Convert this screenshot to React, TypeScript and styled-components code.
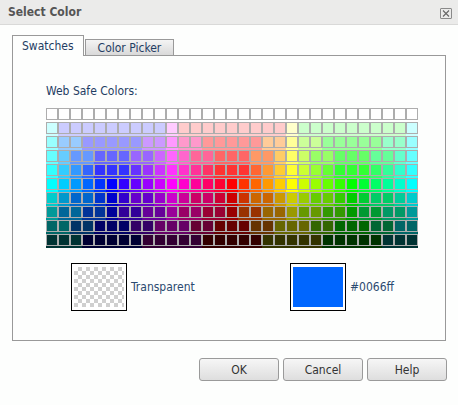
import styled, { createGlobalStyle } from "styled-components";

const COLS = 31;
const ROWS = 10;

// hue walks cyan -> blue -> magenta -> red -> yellow -> green -> cyan
const pureColor = (col: number): number[] => {
  const h = ((180 + col * 12) % 360) / 60;
  const x = 1 - Math.abs((h % 2) - 1);
  const seg = Math.floor(h) % 6;
  const table = [
    [1, x, 0],
    [x, 1, 0],
    [0, 1, x],
    [0, x, 1],
    [x, 0, 1],
    [1, 0, x],
  ];
  return table[seg].map((v) => v * 255);
};

const toHex = (rgb: number[]) =>
  "#" + rgb.map((v) => Math.max(0, Math.min(255, v)).toString(16).padStart(2, "0")).join("");

const swatchColor = (row: number, col: number) => {
  if (row === 0) return "#ffffff";
  const base = pureColor(col);
  if (row < 5) {
    const t = (5 - row) * 0.2;
    return toHex(base.map((v) => Math.floor((v + (255 - v) * t) / 51 + 0.001) * 51));
  }
  const k = 1 - (row - 5) * 0.2;
  return toHex(base.map((v) => Math.round((v * k) / 51) * 51));
};

const GlobalStyle = createGlobalStyle`
  body {
    margin: 0;
    background: #fdfefd;
    font-family: "DejaVu Sans Condensed", "DejaVu Sans", sans-serif;
  }
`;

const Dialog = styled.div`
  width: 458px;
  height: 405px;
  display: flex;
  flex-direction: column;
  background: #fdfefd;
`;

const TitleBar = styled.div`
  height: 24px;
  display: flex;
  align-items: center;
  justify-content: space-between;
  padding: 0 6px 0 8px;
  background: #ebebea;
  border-bottom: 1px solid #d9d9d8;
`;

const Title = styled.span`
  font-size: 12px;
  font-weight: bold;
  color: #555;
`;

const CloseButton = styled.div`
  width: 10px;
  height: 9px;
  border: 1px solid #8a8a8a;
  border-radius: 1px;
  display: flex;
  align-items: center;
  justify-content: center;
  margin-top: 2px;
`;

const Body = styled.div`
  padding: 10px 11px 0 12px;
  display: flex;
  flex-direction: column;
`;

const Tabs = styled.div`
  display: flex;
  align-items: flex-end;
  height: 21px;
  position: relative;
  z-index: 1;
`;

const Tab = styled.div<{ $active?: boolean }>`
  height: ${(p) => (p.$active ? "21px" : "17px")};
  padding: 0 ${(p) => (p.$active ? "9px" : "12px")};
  display: flex;
  align-items: center;
  font-size: 12px;
  color: #1f3d63;
  border: 1px solid #999;
  border-bottom: ${(p) => (p.$active ? "none" : "1px solid #999")};
  background: ${(p) =>
    p.$active ? "#fdfefd" : "linear-gradient(#f4f4f4, #d9d9d9)"};
  margin-right: 1px;
  box-sizing: border-box;
`;

const Panel = styled.div`
  height: 286px;
  box-sizing: border-box;
  border: 1px solid #999;
  margin-top: -1px;
  margin-right: 1px;
  padding: 28px 0 0 33px;
`;

const Label = styled.div`
  font-size: 12px;
  color: #1f3d63;
  height: 14px;
  line-height: 14px;
  margin-bottom: 10px;
`;

const Grid = styled.div`
  display: grid;
  grid-template-columns: repeat(${COLS}, 12px);
  grid-auto-rows: 14px;
  width: max-content;
`;

const Cell = styled.div`
  height: 14px;
`;

const Square = styled.div`
  width: 12px;
  height: 12px;
  box-sizing: border-box;
  border: 1px solid #adadad;
`;

const Previews = styled.div`
  display: grid;
  grid-template-columns: 219px auto;
  margin: 15px 0 0 25px;
`;

const PreviewItem = styled.div`
  display: flex;
  align-items: center;
  gap: 4px;
`;

const PreviewBox = styled.div`
  width: 56px;
  height: 48px;
  box-sizing: border-box;
  border: 1px solid #000;
  padding: 3px 2px;
  background: #fff;
  display: flex;
`;

const Fill = styled.div<{ $color?: string }>`
  flex: 1;
  background: ${(p) =>
    p.$color ?? "repeating-conic-gradient(#cfcfcf 0% 25%, #ffffff 0% 50%) 0 0 / 8px 8px"};
`;

const PreviewText = styled.span`
  font-size: 12px;
  color: #2b4a70;
`;

const Buttons = styled.div`
  display: flex;
  justify-content: flex-end;
  gap: 4px;
  padding-top: 17px;
`;

const Button = styled.button`
  width: 80px;
  height: 23px;
  border: 1px solid #9a9a9a;
  border-radius: 3px;
  background: linear-gradient(#f6f6f6, #dedede);
  font-family: inherit;
  font-size: 12px;
  color: #333;
  padding: 0;
`;

export default function App() {
  const cells = [];
  for (let r = 0; r < ROWS; r++) {
    for (let c = 0; c < COLS; c++) {
      const color = swatchColor(r, c);
      cells.push(
        <Cell key={`${r}-${c}`} style={{ background: color }}>
          <Square style={{ background: color }} />
        </Cell>
      );
    }
  }

  return (
    <>
      <GlobalStyle />
      <Dialog>
        <TitleBar>
          <Title>Select Color</Title>
          <CloseButton>
            <svg width="8" height="7" viewBox="0 0 8 7">
              <path d="M1 0.5L7 6.5M7 0.5L1 6.5" stroke="#666" strokeWidth="1.1" />
            </svg>
          </CloseButton>
        </TitleBar>
        <Body>
          <Tabs>
            <Tab $active>Swatches</Tab>
            <Tab>Color Picker</Tab>
          </Tabs>
          <Panel>
            <Label>Web Safe Colors:</Label>
            <Grid>{cells}</Grid>
            <Previews>
              <PreviewItem>
                <PreviewBox>
                  <Fill />
                </PreviewBox>
                <PreviewText>Transparent</PreviewText>
              </PreviewItem>
              <PreviewItem>
                <PreviewBox>
                  <Fill $color="#0066ff" />
                </PreviewBox>
                <PreviewText>#0066ff</PreviewText>
              </PreviewItem>
            </Previews>
          </Panel>
          <Buttons>
            <Button>OK</Button>
            <Button>Cancel</Button>
            <Button>Help</Button>
          </Buttons>
        </Body>
      </Dialog>
    </>
  );
}
